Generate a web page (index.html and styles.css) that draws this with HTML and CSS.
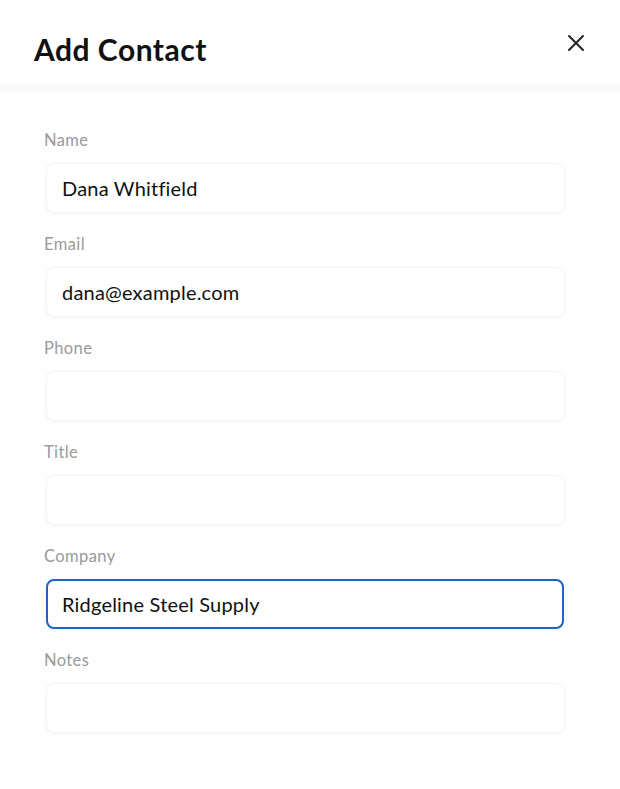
FILE: index.html
```html
<!DOCTYPE html>
<html>
<head>
    <title>Add Contact</title>
    <link rel="stylesheet" href="styles.css">
</head>
<body>
    <div class="modal">
        <div class="modal-header">
            <h1>Add Contact</h1>
            <button class="close-btn" aria-label="Close">
                <svg width="20" height="20" viewBox="0 0 20 20">
                    <path d="M3 3 L17 17 M17 3 L3 17" stroke="#222" stroke-width="2" stroke-linecap="round" fill="none"/>
                </svg>
            </button>
        </div>
        <form class="modal-body">
            <div class="field">
                <label for="name">Name</label>
                <input id="name" type="text" value="Dana Whitfield">
            </div>
            <div class="field">
                <label for="email">Email</label>
                <input id="email" type="text" value="dana@example.com">
            </div>
            <div class="field">
                <label for="phone">Phone</label>
                <input id="phone" type="text" value="">
            </div>
            <div class="field">
                <label for="title">Title</label>
                <input id="title" type="text" value="">
            </div>
            <div class="field">
                <label for="company">Company</label>
                <input id="company" class="focused" type="text" value="Ridgeline Steel Supply">
            </div>
            <div class="field">
                <label for="notes">Notes</label>
                <input id="notes" type="text" value="">
            </div>
        </form>
    </div>
</body>
</html>
```

FILE: styles.css
```css
body {
    margin: 0;
    background-color: #fff;
    font-family: Lato, "Noto Sans", sans-serif;
    color: #111;
}
.modal {
    width: 620px;
}
.modal-header {
    display: flex;
    justify-content: space-between;
    align-items: flex-start;
    height: 92px;
    padding: 0 34px 0 34px;
    box-sizing: border-box;
    border-bottom: 8px solid #fafafa; /* faint band under the header */
}
.modal-header h1 {
    margin: 29px 0 0 0;
    font-size: 30px;
    line-height: 40px;
    font-weight: 700;
    letter-spacing: 0.5px;
}
.close-btn {
    margin-top: 33px;
    padding: 0;
    border: none;
    background: none;
    cursor: pointer;
}
.modal-body {
    padding: 38px 55px 0 44px;
}
.field {
    display: flex;
    flex-direction: column;
    margin-bottom: 21px;
}
.field label {
    font-size: 16.5px;
    line-height: 20px;
    letter-spacing: 0.4px;
    color: #9a9a9a;
    margin-bottom: 13px;
}
.field input {
    margin-left: 2px;
    height: 50px;
    box-sizing: border-box;
    padding: 0 15px;
    font-family: inherit;
    font-size: 20px;
    letter-spacing: 0.2px;
    color: #111;
    border: 1px solid #f4f4f4;
    border-radius: 8px;
    box-shadow: 0 1px 4px rgba(0, 0, 0, 0.04);
    outline: none;
}
.field input.focused {
    border: 2px solid #1f63c4;
    padding: 0 14px;
    width: 518px;
}
```
